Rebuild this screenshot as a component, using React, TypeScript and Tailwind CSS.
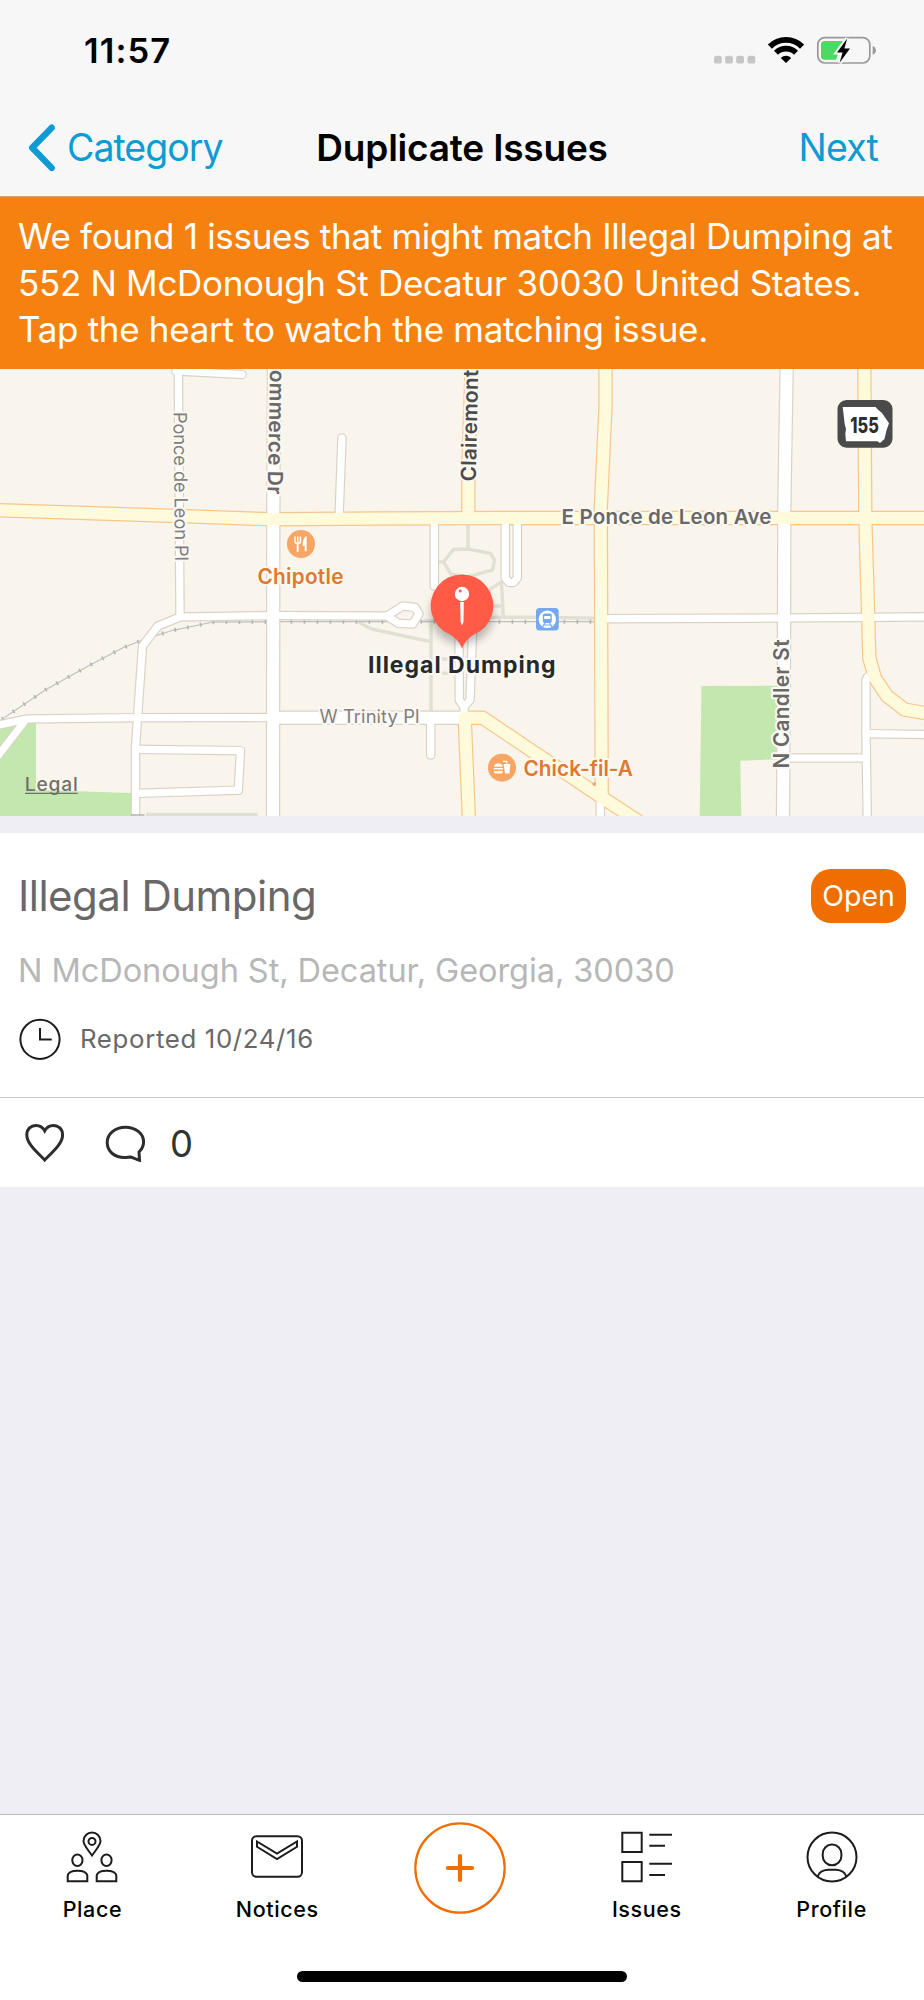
import React from 'react';

type Tone = 'white' | 'yellow';

interface Road {
    d: string;
    tone: Tone;
    wide?: boolean;
}

// Street geometry, drawn twice: once as casing, once as fill
const ROADS: Road[] = [
    { tone: 'white', d: 'M176 371 L242 374.5' },
    { tone: 'white', d: 'M178.3 365 L180 617' },
    { tone: 'white', d: 'M387 616 L273 615.5 L180 617 L158 626 L142.5 646 L137.5 718 L135.5 748 L135.5 820' },
    { tone: 'white', d: 'M-6 726 L27 719 L137 717.7 L273 717.5' },
    { tone: 'white', d: 'M24 722 L-6 761' },
    { tone: 'white', d: 'M137 749.3 L240.5 750.7 L238.3 790.2 L137 793.3' },
    { tone: 'white', d: 'M342 438 L339 518' },
    { tone: 'white', d: 'M434.3 518 L434.3 586' },
    { tone: 'white', d: 'M505.3 518 L505.3 578 L509 582.5 L513.5 582.5 L517.3 578 L517.3 518' },
    { tone: 'white', d: 'M387 616 L402.7 606 L415 607.3 L419 614 L412.7 624 L398.3 623.3 Z' },
    { tone: 'white', d: 'M459 630 L459.3 700 L464 707 L470 700 L472.6 630 M464 707 L464.3 718' },
    { tone: 'white', d: 'M430.7 718 L430.7 755' },
    { tone: 'white', d: 'M601 618.7 L784 618 L930 616.8' },
    { tone: 'white', d: 'M783 758 L865 758' },
    { tone: 'white', d: 'M866 733.7 L930 734.6' },
    { tone: 'white', d: 'M867.5 677 L866 680 L866 733 L867.3 820' },
    { tone: 'white', d: 'M600.3 795 L600.3 820' },
    { tone: 'white', wide: true, d: 'M274 365 L273.3 520 L273 820' },
    { tone: 'white', wide: true, d: 'M273 717.7 L462 717.7' },
    { tone: 'white', wide: true, d: 'M786.7 365 L784.3 508 L784 640 L783 820' },
    { tone: 'yellow', wide: true, d: 'M-6 510 L178 516 L273 519.3 L380 518.5 L505 518 L930 518' },
    { tone: 'yellow', wide: true, d: 'M471.7 365 L468.3 470 L468.3 518' },
    { tone: 'yellow', wide: true, d: 'M605.5 365 L605.5 407 L600.8 508 L601.7 797' },
    { tone: 'yellow', wide: true, d: 'M469 822 L464.7 717.7 L482.7 717.7 L533 751.7 L570 776 L601.7 797.3 L638 821' },
    { tone: 'yellow', wide: true, d: 'M864.3 365 L865.3 518 L868.3 620 L869.3 658 L875 678 L887 696 L904.5 709.5 L930 714' },
];

const CASING: Record<Tone, string> = { white: '#dbd2c7', yellow: '#f7c68c' };
const FILL: Record<Tone, string> = { white: '#ffffff', yellow: '#fdfbdb' };

const RAIL = 'M-2 722 L46 689.5 L90 665 L123 647.7 L146 638.7 L173 630.3 L199 625 L212 622.2 L280 621.7 L596 621.7';

const LABEL = 'stroke-[#fbf8f2] stroke-[4px] [paint-order:stroke] [stroke-linejoin:round]';

const Roads: React.FC<{ tone: Tone; casing?: boolean }> = ({ tone, casing }) => (
    <g fill="none" stroke={casing ? CASING[tone] : FILL[tone]} strokeLinejoin="round" strokeLinecap="round">
        {ROADS.filter(r => r.tone === tone).map(r => (
            <path key={r.d} d={r.d} strokeWidth={(r.wide ? 12 : 7.2) + (casing ? 2.4 : 0)} />
        ))}
    </g>
);

const IssueMap: React.FC = () => (
    <svg viewBox="0 369 924 446.5" className="block w-[924px] h-[446.5px] bg-[#f9f4ec] font-['Inter',sans-serif]">
        {/* Parks */}
        <path d="M0 722 H36 V790 L132 793 V816 H0 Z" fill="#c2e8ae" />
        <path d="M701.5 686 L777 685.7 L777 759.3 L740.3 760.7 L741.3 816 L699.7 816 Z" fill="#c2e8ae" />

        {/* Footpaths */}
        <g fill="none" stroke="#e2e0d3" strokeWidth="3.4" strokeLinejoin="round">
            <path d="M468 522 L468 549" />
            <path d="M438 562 H443.5 L453.5 549.5 L468 549 L490.5 553.3 L494.5 560 L492.5 570 L467 577 L451 574 L443.5 562" />
            <path d="M488 590.5 L501.5 582 L503.3 617 M493 606 H504 M490 617.3 H536 L596 618.3" />
            <path d="M423 620.7 H440 M358 621.7 L371.5 629 L430.5 641.7 M431 621 V712" />
            <path d="M442 659 H454 M442 673.3 H455" />
            <path d="M146 814.5 H257.5" />
        </g>
        <path d={RAIL} fill="none" stroke="#bfbfbd" strokeWidth="1.2" />
        <path d={RAIL} fill="none" stroke="#b4b4b4" strokeWidth="4" strokeDasharray="1.6 11.4" strokeDashoffset="-5" />

        <Roads tone="white" casing />
        <Roads tone="yellow" casing />
        <Roads tone="white" />
        <Roads tone="yellow" />
        <path d="M131 815 H144.5" stroke="#b9b6b1" strokeWidth="1.6" />
        <path d="M596 781.3 l-4 2.3 4 2.4z" fill="#f1a35c" transform="translate(-.5 .5)" />

        {/* Street names */}
        <g className={LABEL} fontSize="20.8" fontWeight="600" fill="#686868">
            <text fontSize="18.4" fontWeight="400" fill="#7f7f7f" textLength="149" transform="translate(173.5 412) rotate(89.4)">Ponce de Leon Pl</text>
            <text textLength="124.5" transform="translate(270 369.8) rotate(91.1)">ommerce Dr</text>
            <text fill="#4b4b4b" textLength="111.5" transform="translate(475.7 481.5) rotate(-88.7)">Clairemont</text>
            <text textLength="129" transform="translate(789.3 768.5) rotate(-90)">N Candler St</text>
            <text x="561.5" y="523.5" textLength="210" fontSize="20.6">E Ponce de Leon Ave</text>
            <text x="319.5" y="722.7" textLength="100" fontSize="18.4" fontWeight="400" fill="#7f7f7f">W Trinity Pl</text>
        </g>

        {/* Places */}
        <g className={LABEL} fontSize="20.8" fontWeight="600" fill="#de7a2e">
            <text x="257.5" y="583.5" textLength="86">Chipotle</text>
            <text x="523.5" y="775.5" textLength="109.5">Chick-fil-A</text>
        </g>
        <circle cx="301" cy="544" r="14" fill="#f7a565" />
        <g fill="none" stroke="#fff" strokeLinecap="round">
            <path d="M295 537 v4.5 q0 2 2.7 2 q2.7 0 2.7 -2 v-4.5 M297.7 537 v6" strokeWidth="1.5" />
            <path d="M297.7 543 v8" strokeWidth="2" />
        </g>
        <path d="M306.7 536 v15.3 h-2 v-5.3 h-2 q-.4 -8.5 4 -10z" fill="#fff" />
        <circle cx="502" cy="767.7" r="14" fill="#f7a565" />
        <g fill="#fff">
            <path d="M494 766.8 q.4 -3.3 4.2 -3.3 q4.2 0 4.6 3.3z M493.7 768 h9.3 v1.6 h-9.3z M494 771 h8.6 v1 q0 1.6 -1.6 1.6 h-5.4 q-1.6 0 -1.6 -1.6z" />
            <path d="M503.6 764 h6.8 l-1 9.6 h-4.4z" />
            <path d="M503 761.4 h3.6 v2" fill="none" stroke="#fff" strokeWidth="1.4" />
        </g>
        <rect x="536" y="608" width="22.7" height="22.6" rx="3.5" fill="#74a9ef" />
        <circle cx="547.3" cy="619.3" r="8.7" fill="#fff" />
        <rect x="542.8" y="613.4" width="9" height="9.6" rx="2" fill="#74a9ef" />
        <path d="M544.2 616 h6.2 v3 h-6.2z" fill="#fff" />
        <path d="M545 623 l-2.4 3.6 M549.6 623 l2.4 3.6 M544 625 h6.6" stroke="#74a9ef" strokeWidth="1.2" />

        {/* Route shield */}
        <rect x="837.5" y="400" width="55" height="47.7" rx="9" fill="#4a4a4a" />
        <path d="M842.7 407 H875.7 L877.5 409.3 L882 413 L889 423.3 L886.3 431 L884.5 439 L880 443 L877.3 441.3 H846 L845.3 434 L846 429 L844.7 424 Z" fill="#fff" />
        <text x="850.3" y="432.5" fontSize="21.5" fontWeight="800" fill="#2d2d2d" textLength="28.5" lengthAdjust="spacingAndGlyphs">155</text>

        {/* Pin */}
        <ellipse cx="462" cy="614.5" rx="31" ry="29" fill="#000" opacity=".28" className="blur-[5px]" />
        <path d="M462 648.5 C460 643.5 456 638 450 634.6 A31.3 31.3 0 1 1 474 634.6 C468 638 464 643.5 462 648.5 Z" fill="#ff5b47" />
        <circle cx="462" cy="594" r="7.2" fill="#fff" />
        <circle cx="460.2" cy="591" r="1.5" fill="#ff5b47" />
        <path d="M460.2 602 H463.8 L463.5 622 L462 625.5 L460.6 622 Z" fill="#fff" />
        <text x="368" y="672.7" textLength="187.5" fontSize="23" fontWeight="650" fill="#26292c" className={LABEL}>Illegal Dumping</text>

        <text x="24.8" y="790.7" textLength="53" fontSize="19.2" fontWeight="500" fill="#70716a">Legal</text>
        <path d="M25 793.3 H77.7" stroke="#70716a" strokeWidth="1.3" />
    </svg>
);

const StatusBar: React.FC = () => (
    <div className="flex h-[101px] items-center justify-between pl-[84px] pr-[47px]">
        <span className="text-[34.5px] font-semibold tracking-[1.1px] text-black">11:57</span>
        <svg viewBox="713 36 164 29" className="h-[29px] w-[164px]">
            {[714, 725.1, 736.2, 747.5].map(x => (
                <rect key={x} x={x} y="55.8" width="7.8" height="7.8" rx="2.2" fill="#c6c6c6" />
            ))}
            <g fill="none" stroke="#000">
                <path d="M769.9 46.6 A22.8 22.8 0 0 1 802.1 46.6" strokeWidth="5.8" />
                <path d="M776 52.7 A14.2 14.2 0 0 1 796 52.7" strokeWidth="5.6" />
            </g>
            <path d="M786 63 L780.8 58 A7.4 7.4 0 0 1 791.2 58 Z" />
            <rect x="817.8" y="37.6" width="52" height="25.4" rx="7" fill="none" stroke="#999" strokeWidth="1.7" />
            <path d="M872.7 46 q3.2 1.4 3.2 4.4 q0 3 -3.2 4.4z" fill="#999" />
            <path d="M824.5 41 H843 L836 59.8 H824.5 Q821 59.8 821 56.3 V44.5 Q821 41 824.5 41 Z" fill="#4cd964" />
            <path d="M847.2 38.5 L837 52.6 H842.6 L839.6 62.8 L850 48.6 H844.4 Z" stroke="#f7f7f7" strokeWidth="4" />
            <path d="M847.2 38.5 L837 52.6 H842.6 L839.6 62.8 L850 48.6 H844.4 Z" />
        </svg>
    </div>
);

const NavBar: React.FC = () => (
    <div className="grid h-[95px] grid-cols-3 items-center pb-[2px] text-[37.5px] leading-[48px] text-[#0e9ad3]">
        <button className="flex items-center pl-[27px]">
            <svg viewBox="28 123 30 50" className="h-[50px] w-[30px]" fill="none" stroke="currentColor" strokeWidth="6.4" strokeLinecap="round">
                <path d="M52.7 127.7 L33.2 147.7 L52.7 167.9" strokeLinejoin="round" />
            </svg>
            <span className="ml-[10px] tracking-[-1px]">Category</span>
        </button>
        <h1 className="whitespace-nowrap text-center text-[37px] font-semibold tracking-[-0.2px] text-black">Duplicate Issues</h1>
        <button className="pr-[46px] text-right tracking-[-0.8px]">Next</button>
    </div>
);

const IssueCard: React.FC = () => (
    <section className="bg-white">
        <div className="h-[264px] pl-[18px] pr-[18px] pt-[36px]">
            <div className="flex h-[54px] items-center justify-between">
                <h2 className="text-[42px] leading-[54px] tracking-[-0.5px] text-[#686868]">Illegal Dumping</h2>
                <span className="h-[54px] w-[95px] rounded-[20px] bg-[#f06d00] text-center text-[28.5px] leading-[54px] text-white">Open</span>
            </div>
            <p className="mt-[26px] text-[32.5px] leading-[44px] tracking-[-0.07px] text-[#b7b7b7]">N McDonough St, Decatur, Georgia, 30030</p>
            <div className="mt-[25px] flex h-[42px] items-center pl-[1px]">
                <svg viewBox="0 0 42 42" className="h-[42px] w-[42px]" fill="none" stroke="#1c1c1c" strokeWidth="2">
                    <circle cx="21" cy="21.3" r="19.6" />
                    <path d="M21 10 V21.5 H32.7" />
                </svg>
                <span className="ml-[19px] pt-[1px] text-[25.8px] tracking-[0.65px] text-[#686868]">Reported 10/24/16</span>
            </div>
        </div>
        <div className="flex h-[90px] items-center border-t border-[#c6c6c9] pl-[24px]">
            <svg viewBox="24 1121 42 42" className="h-[42px] w-[42px]" fill="none" stroke="#2d2d2d" strokeWidth="3">
                <path d="M44.7 1159 C38 1152 26.8 1143 26.8 1134 C26.8 1128 31 1124.4 36.2 1124.4 C40 1124.4 43 1126.6 44.7 1129.8 C46.4 1126.6 49.4 1124.4 53.2 1124.4 C58.4 1124.4 62.6 1128 62.6 1134 C62.6 1143 51.4 1152 44.7 1159 Z" />
            </svg>
            <svg viewBox="104 1122 42 42" className="ml-[38px] h-[42px] w-[42px]" fill="none" stroke="#2d2d2d" strokeWidth="3">
                <path d="M139.5 1160.3 L139 1152 C142 1149 143.6 1145.6 143.6 1142 C143.6 1133.5 135.5 1127.2 125.5 1127.2 C115 1127.2 107.2 1134 107.2 1142.5 C107.2 1151.8 115 1157.5 124.5 1157.5 C127 1157.5 128.5 1157 130.5 1157 C133 1157.3 136 1159.5 139.5 1160.3 Z" />
            </svg>
            <span className="ml-[24px] pt-[2px] text-[36.5px] leading-[44px] text-[#333]">0</span>
        </div>
    </section>
);

const ICONS: Record<string, React.ReactNode> = {
    Place: (
        <>
            <path d="M26 24.5 C21 17.5 17.5 14 17.5 10 A8.5 8.5 0 0 1 34.5 10 C34.5 14 31 17.5 26 24.5 Z" />
            <circle cx="26" cy="10.4" r="3.5" />
            <ellipse cx="11.4" cy="29.3" rx="5.1" ry="5.8" />
            <ellipse cx="40.5" cy="29.3" rx="5.1" ry="5.8" />
            <path d="M1.7 50.3 V44.5 Q2.5 39.7 11.5 39.7 Q20.5 39.7 21.3 44.5 V50.3 Z" />
            <path d="M30.7 50.3 V44.5 Q31.5 39.7 40.5 39.7 Q49.5 39.7 50.3 44.5 V50.3 Z" />
        </>
    ),
    Notices: (
        <>
            <rect x="1" y="5.2" width="50" height="40.6" rx="4.5" />
            <path d="M6 10.5 L26 22.7 L46 10.5 V15.8 L26 28 L6 15.8 Z" />
        </>
    ),
    Issues: (
        <>
            <path d="M1.3 1.7 H20.7 V21 H1.3 Z M1.3 30.9 H20.7 V50.2 H1.3 Z" />
            <path d="M28.3 3.7 H51 M28.3 14.8 H44 M28.3 32.7 H51 M28.3 43.9 H44" />
        </>
    ),
    Profile: (
        <>
            <circle cx="26" cy="26" r="24.5" />
            <rect x="16.7" y="13.6" width="18.7" height="20.7" rx="9.3" />
            <path d="M11.5 46 C13 41 17.5 39 22 38.8 H30 C34.5 39 39 41 40.5 46" />
        </>
    ),
};

const Tab: React.FC<{ label: string }> = ({ label }) => (
    <button className="flex w-1/5 flex-col items-center pt-[16px]">
        <svg viewBox="0 0 52 52" className="h-[52px] w-[52px]" fill="none" stroke="#1c1c1c" strokeWidth="2">
            {ICONS[label]}
        </svg>
        <span className="mt-[12px] text-[21.5px] font-medium leading-[28px] tracking-[0.6px] text-black">{label}</span>
    </button>
);

const TabBar: React.FC = () => (
    <nav className="flex h-[186px] flex-col items-center justify-between border-t border-[#b9b9bc] bg-white pb-[18px]">
        <div className="flex w-full">
            <Tab label="Place" />
            <Tab label="Notices" />
            <button className="flex w-1/5 justify-center pr-[3px] pt-[7px]">
                <svg viewBox="0 0 92 92" className="h-[92px] w-[92px]" fill="none" stroke="#f06d00">
                    <circle cx="46" cy="46" r="44.7" strokeWidth="2.2" />
                    <path d="M34 46 H58 M46 34 V58" strokeWidth="4.2" strokeLinecap="round" />
                </svg>
            </button>
            <Tab label="Issues" />
            <Tab label="Profile" />
        </div>
        <div className="h-[11px] w-[330px] rounded-full bg-black" />
    </nav>
);

export default function App() {
    return (
        <div className="flex h-[2000px] w-[924px] flex-col overflow-hidden bg-[#efeef4] font-['Inter',sans-serif]">
            <header className="h-[197px] border-b border-[#c9a680] bg-[#f7f7f7]">
                <StatusBar />
                <NavBar />
            </header>
            <p className="h-[172px] whitespace-nowrap bg-[#f58210] pl-[18px] pt-[16px] text-[35px] leading-[46.7px] tracking-[-0.31px] text-white">
                We found 1 issues that might match Illegal Dumping at<br />
                552 N McDonough St Decatur 30030 United States.<br />
                Tap the heart to watch the matching issue.
            </p>
            <IssueMap />
            <div className="mt-[17.5px] grow">
                <IssueCard />
            </div>
            <TabBar />
        </div>
    );
}
